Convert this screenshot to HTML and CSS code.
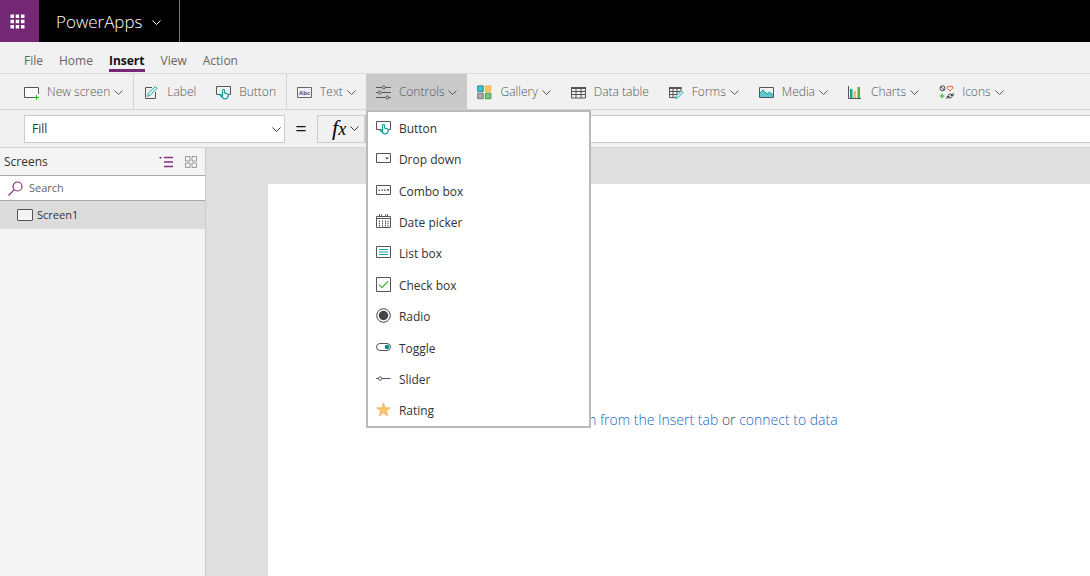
FILE: index.html
```html
<!DOCTYPE html>
<html lang="en">
<head>
<meta charset="utf-8">
<title>PowerApps</title>
<link rel="stylesheet" href="styles.css">
</head>
<body>
<svg class="defs" aria-hidden="true">
  <symbol id="chev" viewBox="0 0 9 9"><path d="M.5 2.500l4 4 4-4" fill="none" stroke="currentColor"/></symbol>
  <symbol id="button" viewBox="0 0 15 15"><path d="M5 9.500H.5v-8h14v8H12" fill="none" stroke="#555"/><path d="M6.500 10V5q1-1.500 2 0v3l3 .8q1 .4.700 2l-.7 2q-2.500 2.200-4.800 0L4.300 10.500q.4-1.500 2.200.3z" fill="#f4ffff" stroke="#1ba1a1" stroke-width="1.200"/></symbol>
</svg>
<header class="top">
  <button class="waffle" aria-label="App launcher"><svg viewBox="0 0 15 15" width="15" height="15"><path d="M.5.500h3.500v3.500H.500zM5.700.500h3.500v3.500H5.700zM11 .500h3.500v3.500H11zM.500 5.700h3.500v3.500H.500zM5.700 5.700h3.500v3.500H5.700zM11 5.700h3.500v3.500H11zM.500 11h3.500v3.500H.500zM5.700 11h3.500v3.500H5.700zM11 11h3.500v3.500H11z" fill="#fff"/></svg></button>
  <button class="brand"><span>PowerApps</span><svg class="chev"><use href="#chev"/></svg></button>
</header>
<nav class="tabs">
  <a href="#file">File</a><a href="#home">Home</a><a href="#insert" class="active">Insert</a><a href="#view">View</a><a href="#action">Action</a>
</nav>
<div class="ribbon">
  <div class="group">
    <button class="tool"><svg class="icon" viewBox="0 0 15 15"><path d="M10 12.500H.5v-10h14V9" fill="#fafafa" stroke="#555"/><path d="M12.500 10v5M10 12.500h5" stroke="#3a3"/></svg><span>New screen</span><svg class="chev"><use href="#chev"/></svg></button>
  </div>
  <div class="group">
    <button class="tool"><svg class="icon" viewBox="0 0 15 15"><path d="M8 2.500H1.500v11h10V7" fill="none" stroke="#555"/><path d="M3.500 11.500l1-3.500 7-6.500 1.500 1.800-7 7z" fill="#e8fbfb" stroke="#1ba1a1"/></svg><span>Label</span></button>
    <button class="tool"><svg class="icon"><use href="#button"/></svg><span>Button</span></button>
  </div>
  <div class="group last">
    <button class="tool"><svg class="icon" viewBox="0 0 15 15"><path d="M.5 2.500h14v10H.5z" fill="none" stroke="#666"/><text x="2" y="10" class="abc">Abc</text></svg><span>Text</span><svg class="chev"><use href="#chev"/></svg></button>
    <div class="holder">
      <button class="tool open" aria-expanded="true"><svg class="icon" viewBox="0 0 15 15"><path d="M0 2.500h6M9.500 2.500H15M0 7.500h2M5.500 7.500H15M0 12.500h9.500M13 12.500h2" stroke="#555"/><g fill="none" stroke="#555"><circle cx="7.700" cy="2.500" r="1.500"/><circle cx="3.700" cy="7.500" r="1.500"/><circle cx="11.300" cy="12.500" r="1.500"/></g></svg><span>Controls</span><svg class="chev"><use href="#chev"/></svg></button>
      <div class="menu" role="menu">
        <button role="menuitem"><svg class="icon"><use href="#button"/></svg>Button</button>
        <button role="menuitem"><svg class="icon" viewBox="0 0 15 15"><path d="M.5 2.500h14v9H.5z" fill="none" stroke="#555"/><path d="M9 6.500h4l-2 2z" fill="#444"/></svg>Drop down</button>
        <button role="menuitem"><svg class="icon" viewBox="0 0 15 15"><path d="M.5 2.500h14v9H.5z" fill="none" stroke="#555"/><path d="M2.500 6.500H4v1.200H2.500zM5.500 6.500H7v1.200H5.500zM8 6.500h1.500v1.200H8zM10.500 6.200h3l-1.500 2z" fill="#444"/></svg>Combo box</button>
        <button role="menuitem"><svg class="icon" viewBox="0 0 15 15"><path d="M.5 2.500h14v11H.5zM.5 4.500h14M3.500 0v3M11.500 0v3M5.500.5v2M9.500.5v2" fill="none" stroke="#555"/><path d="M3.500 6.500v6M6.500 6.500v6M9.500 6.500v6M12 6.500v6" stroke="#555" stroke-dasharray="1.600 .6"/></svg>Date picker</button>
        <button role="menuitem"><svg class="icon" viewBox="0 0 15 15"><path d="M.5 1.500h14v11H.5z" fill="none" stroke="#555"/><path d="M3 4.500h9M3 7h9M3 9.500h9" stroke="#1ba1a1" stroke-width="1.200"/></svg>List box</button>
        <button role="menuitem"><svg class="icon" viewBox="0 0 15 15"><path d="M.5.500h14v14H.5z" fill="none" stroke="#555"/><path d="M3 7.700l3 3 6-6.500" fill="none" stroke="#4a4" stroke-width="1.200"/></svg>Check box</button>
        <button role="menuitem"><svg class="icon" viewBox="0 0 15 15"><circle cx="7.500" cy="7.500" r="6.800" fill="none" stroke="#444"/><circle cx="7.500" cy="7.500" r="4.700" fill="#444"/></svg>Radio</button>
        <button role="menuitem"><svg class="icon" viewBox="0 0 15 15"><rect x=".5" y="3.500" width="14" height="7" rx="3.500" fill="none" stroke="#555"/><circle cx="11" cy="7" r="2.300" fill="#008c8c"/></svg>Toggle</button>
        <button role="menuitem"><svg class="icon" viewBox="0 0 15 15"><path d="M0 7.500h2.500M6 7.500h8.500" stroke="#555"/><circle cx="4.200" cy="7.500" r="1.700" fill="none" stroke="#555"/></svg>Slider</button>
        <button role="menuitem"><svg class="icon" viewBox="0 0 15 15"><path d="M7.500.8l1.700 5h5.200l-4.200 3 1.600 5.200-4.300-3.200L3.200 14l1.600-5.200-4.200-3h5.200z" fill="#fbc36b" stroke="#f0ad4b" stroke-width=".7"/></svg>Rating</button>
      </div>
    </div>
    <button class="tool"><svg class="icon" viewBox="0 0 15 15"><path d="M.7.900h5.500v5.500H.700z" fill="#45c4c4" stroke="#158e8e"/><path d="M8.400.900h5.500v5.500H8.400z" fill="#ffc463" stroke="#f7b24d"/><path d="M.700 8.200h5.500v5.500H.700z" fill="#aaa" stroke="#777"/><path d="M8.400 8.200h5.500v5.500H8.400z" fill="#77c477" stroke="#40a040"/></svg><span>Gallery</span><svg class="chev"><use href="#chev"/></svg></button>
    <button class="tool"><svg class="icon" viewBox="0 0 15 15"><path d="M.5 2.500h14v10.500H.5zM.5 6.500h14M.5 9.500h14M5 4v9M10 4v9" fill="none" stroke="#555"/><path d="M0 2h15v2H0z" fill="#555"/></svg><span>Data table</span></button>
    <button class="tool"><svg class="icon" viewBox="0 0 15 15"><path d="M6 12.500H.5v-10h11.500v4M.5 6.500H11M.5 9.500H8M4 4v8.500M8 4v5" fill="none" stroke="#555"/><path d="M0 2h12.500v2H0z" fill="#555"/><path d="M6.500 13.500l.8-2.500L12.500 6l1.500 1.500-5 5z" fill="#e8fbfb" stroke="#1ba1a1"/></svg><span>Forms</span><svg class="chev"><use href="#chev"/></svg></button>
    <button class="tool"><svg class="icon" viewBox="0 0 15 15"><path d="M1 8l3-3 4 4 2.500-2 3.500 3v2.500H1z" fill="#5cc9cc"/><path d="M1 8l3-3 4 4 2.500-2 3.500 3" fill="none" stroke="#1ba1a1"/><path d="M.5 2.500h14v10H.5z" fill="none" stroke="#555"/></svg><span>Media</span><svg class="chev"><use href="#chev"/></svg></button>
    <button class="tool"><svg class="icon" viewBox="0 0 15 15"><path d="M.5 1v12.500H13" fill="none" stroke="#555"/><path d="M2 4h2.500v9H2z" fill="#1ba1a1"/><path d="M5.500 6H8v7H5.500z" fill="#fdbb57"/><path d="M9.500 2H12v11H9.500z" fill="#4fae4f"/></svg><span>Charts</span><svg class="chev"><use href="#chev"/></svg></button>
    <button class="tool"><svg class="icon" viewBox="0 0 15 15"><circle cx="3.500" cy="3.300" r="2.500" fill="none" stroke="#444"/><path d="M1.800 1.600l3.500 3.500" stroke="#444"/><path d="M11 6L8.600 3.600q-.8-2.500 1.200-2.500L11 2l1.200-.9q2 0 1.200 2.500z" fill="#fff0ec" stroke="#ee5a36"/><path d="M3 8.500v5M.5 11h5" stroke="#3a3"/><path d="M8.700 10.500q2.500-3 5-.5M14.200 8v2.500h-2.500M13.500 11.500q-2.500 3-5 .5M8 14v-2.500h2.500" fill="none" stroke="#444"/></svg><span>Icons</span><svg class="chev"><use href="#chev"/></svg></button>
  </div>
</div>
<div class="formula">
  <div class="property"><select aria-label="Property"><option>Fill</option></select><svg class="chev"><use href="#chev"/></svg></div>
  <span class="equals">=</span>
  <button class="fx" aria-label="Insert function"><i>f<small>x</small></i><svg class="chev"><use href="#chev"/></svg></button>
  <input class="expr" type="text" aria-label="Formula">
</div>
<div class="work">
  <aside class="side">
    <div class="sidehead"><h2>Screens</h2>
      <button aria-label="Tree view"><svg viewBox="0 0 14 12" width="14" height="12"><path d="M5 1.500h9M5 6h9M5 10.500h9" stroke="#823184" stroke-width="1.400"/><path d="M0 1h3L1.500 3z" fill="#823184"/></svg></button>
      <button aria-label="Thumbnail view"><svg viewBox="0 0 12 12" width="12" height="12"><path d="M.5.500H5V5H.500zM7 .500h4.500V5H7zM.500 7H5v4.500H.500zM7 7h4.500v4.500H7z" fill="none" stroke="#999"/></svg></button>
    </div>
    <label class="search"><svg viewBox="0 0 15 15" width="15" height="15"><circle cx="9.500" cy="5.500" r="4.500" fill="none" stroke="#823184" stroke-width="1.200"/><path d="M6.300 8.700L.5 14.500" stroke="#823184" stroke-width="1.200"/></svg><input type="text" placeholder="Search" aria-label="Search"></label>
    <button class="screen"><svg viewBox="0 0 16 12" width="16" height="12"><rect x=".5" y=".5" width="15" height="11" rx=".5" fill="#f4f4f4" stroke="#555"/></svg>Screen1</button>
  </aside>
  <main class="stage"><div class="canvas"><p><a href="#add">Add an item from the Insert tab</a> or <a href="#connect">connect to data</a></p></div></main>
</div>
</body>
</html>
```
FILE: styles.css
```css
* { box-sizing: border-box; }
body { margin: 0; height: 100vh; overflow: hidden; display: flex; flex-direction: column; background: #f1f1f1; color: #333; font: 12px/16px "Open Sans", "Noto Sans", sans-serif; }
button, input, select { font: inherit; color: inherit; border: 0; background: none; padding: 0; margin: 0; border-radius: 0; outline: 0; }
a { text-decoration: none; color: inherit; }
.defs { position: absolute; width: 0; height: 0; }
.icon { width: 15px; height: 15px; flex: none; }
.chev { width: 9px; height: 9px; flex: none; }
.abc { font: 700 6px "Open Sans", sans-serif; fill: #555; }

.top { display: flex; height: 42px; flex: none; background: #000; color: #fff; }
.waffle { width: 39px; background: #742774; display: grid; place-items: center; padding-right: 4px; }
.brand { display: flex; align-items: center; gap: 9px; padding: 2px 18px 0 17px; font-size: 17px; font-weight: 300; border-right: 1px solid #777; }

.tabs { display: flex; flex: none; gap: 16px; height: 32px; padding: 11px 24px 0; border-bottom: 1px solid #d8d8d8; color: #666; }
.tabs a { height: 19px; }
.tabs .active { color: #111; font-weight: 700; border-bottom: 3px solid #742774; }

.ribbon { display: flex; flex: none; height: 36px; padding-left: 14px; border-bottom: 1px solid #d4d4d4; color: #555; font-weight: 300; }
.group { display: flex; border-right: 1px solid #d4d4d4; }
.last { border: 0; }
.tool { display: flex; align-items: center; padding: 1px 10px 0; white-space: nowrap; height: 35px; }
.tool span { margin-left: 8px; }
.tool .chev { margin-left: 4px; }
.open { background: #cacaca; }
.holder { position: relative; }
.menu { position: absolute; z-index: 2; top: 36px; left: 0; width: 225px; height: 318px; display: flex; flex-direction: column; background: #fff; border: 2px solid #b9b9b9; color: #333; font-weight: 400; }
.menu button { flex: 1; display: flex; align-items: center; gap: 8px; padding: 2px 8px 0; text-align: left; }
.menu .icon { margin-bottom: 3px; }

.formula { display: flex; flex: none; align-items: center; height: 38px; padding-left: 24px; border-bottom: 1px solid #d4d4d4; }
.property { position: relative; width: 261px; height: 28px; background: #fff; border: 1px solid #ccc; }
.property select { appearance: none; width: 100%; height: 100%; padding: 0 7px; }
.property .chev { position: absolute; right: 3px; top: 9px; pointer-events: none; }
.equals { width: 32px; text-align: center; font-size: 20px; color: #111; }
.fx { display: flex; align-items: center; gap: 4px; width: 48px; height: 28px; padding-left: 14px; border: 1px solid #ccc; }
.fx i { font: italic 400 22px/24px "Liberation Serif", serif; color: #000; }
.fx small { font-size: 18px; }
.expr { flex: 1; min-width: 0; height: 28px; padding: 0 8px; background: #fff; border: 1px solid #ccc; border-right: 0; }

.work { display: flex; flex: 1; min-height: 0; }
.side { width: 206px; flex: none; background: #f4f4f4; border-right: 1px solid #ccc; }
.sidehead { display: flex; align-items: center; gap: 12px; height: 27px; padding: 0 8px 0 4px; }
.sidehead h2 { flex: 1; margin: 0; font-size: 12px; font-weight: 400; }
.sidehead button { display: flex; }
.search { display: flex; align-items: center; gap: 6px; height: 26px; padding-left: 8px; background: #fff; border: solid #aaa; border-width: 1px 0; }
.search input { flex: 1; min-width: 0; font-size: 11px; }
.search input::placeholder { color: #666; opacity: 1; }
.screen { display: flex; align-items: center; gap: 4px; width: 100%; height: 28px; padding-left: 17px; background: #dcdcdc; font-size: 11px; }
.stage { flex: 1; display: flex; padding: 36px 0 0 62px; background: #dfdfdf; }
.canvas { flex: 1; background: #fff; padding-top: 226px; text-align: center; }
.canvas p { margin: 0; font-size: 14px; line-height: 20px; font-weight: 300; color: #444; }
.canvas a { color: #1569c4; }
```
